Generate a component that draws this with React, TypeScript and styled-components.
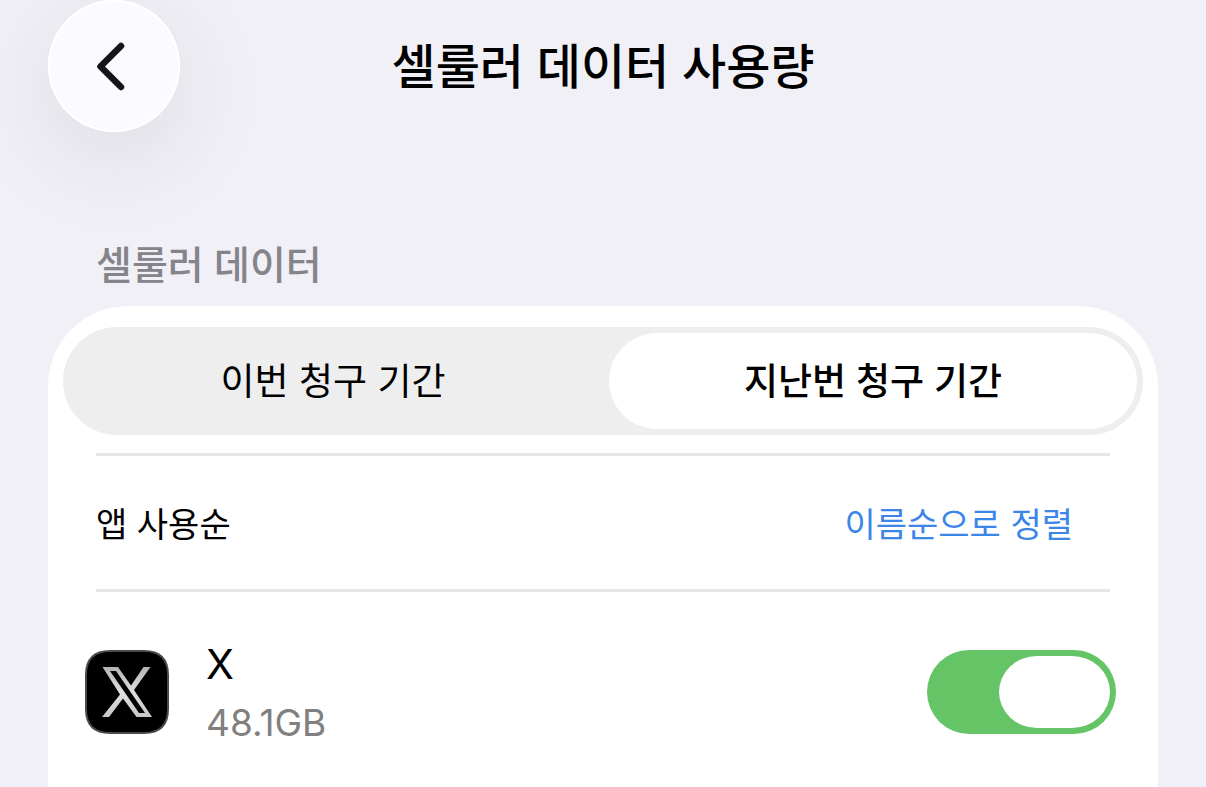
import React, { useState } from "react";
import styled, { createGlobalStyle } from "styled-components";

const Global = createGlobalStyle`
  * { box-sizing: border-box; }
  html, body { margin: 0; min-height: 100%; background: #f1f0f6; }
  body { font-family: Inter, "Noto Sans CJK KR", sans-serif; color: #000; }
  button { font-family: inherit; border: 0; padding: 0; background: none; cursor: pointer; }
  h1, h2 { margin: 0; }
`;

const Page = styled.div`
  min-height: 100vh;
  display: flex;
  flex-direction: column;
  padding: 0 48px;
`;

const Header = styled.header`
  display: grid;
  grid-template-columns: 132px 1fr 132px;
  align-items: center;
`;

const BackButton = styled.button`
  width: 132px;
  height: 132px;
  border-radius: 50%;
  && { background: #fafaff; }
  box-shadow: inset 0 0 0 2px #fff, 0 24px 100px rgba(50, 50, 54, 0.11);
  display: flex;
  align-items: center;
  justify-content: center;
`;

const Title = styled.h1`
  padding-top: 2px;
  text-align: center;
  font-size: 48px;
  line-height: 64px;
  font-weight: 500;
`;

const SectionTitle = styled.h2`
  margin: 104px 48px 12px;
  font-size: 39px;
  line-height: 58px;
  font-weight: 500;
  color: #85848b;
`;

const Card = styled.main`
  flex: 1 0 auto;
  background: #fff;
  border-radius: 80px 80px 0 0;
  padding: 21px 15px 0;
`;

const Segments = styled.div`
  display: grid;
  grid-template-columns: 1fr 1fr;
  gap: 12px;
  height: 108px;
  margin-bottom: 18px;
  padding: 6px;
  border-radius: 54px;
  background: #eeeeee;
`;

const Segment = styled.button<{ $active: boolean }>`
  && {
    padding-top: 2px;
    background: ${(p) => (p.$active ? "#fff" : "transparent")};
  }
  border-radius: 48px;
  color: #000;
  font-size: 37px;
  line-height: 56px;
  font-weight: ${(p) => (p.$active ? 500 : 400)};
`;

const Divider = styled.hr`
  height: 3px;
  margin: 0 33px;
  border: 0;
  background: #e6e6e6;
`;

const SortRow = styled.div`
  display: flex;
  justify-content: space-between;
  align-items: center;
  height: 133px;
  padding: 4px 70px 0 33px;
  font-size: 34px;
  line-height: 50px;
`;

const SortButton = styled.button`
  font-size: 34px;
  line-height: 50px;
  color: #3b86e8;
`;

const AppRow = styled.label`
  display: flex;
  align-items: center;
  padding: 41px 27px 36px 22px;
`;

const AppText = styled.span`
  flex: 1;
  display: flex;
  flex-direction: column;
  margin-left: 37px;
`;

const AppName = styled.span`
  font-size: 41px;
  line-height: 62px;
`;

const AppUsage = styled.span`
  font-size: 37px;
  line-height: 56px;
  color: #808080;
`;

const Switch = styled.input`
  appearance: none;
  width: 189px;
  height: 84px;
  margin: 0;
  padding: 6px;
  border-radius: 42px;
  display: flex;
  justify-content: flex-start;
  background: #d9d9dc;
  cursor: pointer;
  &::before {
    content: "";
    width: 111px;
    height: 72px;
    border-radius: 38px / 36px;
    background: #fff;
  }
  &:checked { background: #65c466; justify-content: flex-end; }
`;

const XIcon = () => (
  <svg width="84" height="84" viewBox="0 0 84 84" aria-hidden="true">
    <defs>
      <linearGradient id="silver" x1="0" y1="0" x2="0" y2="1">
        <stop offset="0" stopColor="#b4b4b4" />
        <stop offset="0.5" stopColor="#dedede" />
        <stop offset="1" stopColor="#c8c8c8" />
      </linearGradient>
    </defs>
    <path
      d="M25 1H59C75 1 83 9 83 25V59C83 75 75 83 59 83H25C9 83 1 75 1 59V25C1 9 9 1 25 1Z"
      fill="#000"
      stroke="#4a4a4a"
      strokeWidth="2"
    />
    <path
      fill="url(#silver)"
      fillRule="evenodd"
      d="M17.500 17H33L46 35.500 58.500 17H65.500L49 40 67 67H51.500L38 48.500 24 67H17L35 44.500ZM25 21 54 63H60L31 21Z"
    />
  </svg>
);

const periods = ["이번 청구 기간", "지난번 청구 기간"];

export default function App() {
  const [period, setPeriod] = useState(1);
  const [on, setOn] = useState(true);
  return (
    <>
      <Global />
      <Page>
        <Header>
          <BackButton type="button" aria-label="뒤로">
            <svg width="42" height="56" viewBox="0 0 42 56" aria-hidden="true">
              <path d="M28 8 7.500 28.500 28 49" fill="none" stroke="#151519" strokeWidth="6.500" strokeLinecap="round" strokeLinejoin="round" />
            </svg>
          </BackButton>
          <Title>셀룰러 데이터 사용량</Title>
        </Header>
        <SectionTitle>셀룰러 데이터</SectionTitle>
        <Card>
          <Segments>
            {periods.map((label, i) => (
              <Segment key={label} type="button" aria-pressed={period === i} $active={period === i} onClick={() => setPeriod(i)}>
                {label}
              </Segment>
            ))}
          </Segments>
          <Divider />
          <SortRow>
            <span>앱 사용순</span>
            <SortButton type="button">이름순으로 정렬</SortButton>
          </SortRow>
          <Divider />
          <AppRow>
            <XIcon />
            <AppText>
              <AppName>X</AppName>
              <AppUsage>48.1GB</AppUsage>
            </AppText>
            <Switch type="checkbox" checked={on} onChange={(e) => setOn(e.target.checked)} />
          </AppRow>
        </Card>
      </Page>
    </>
  );
}
